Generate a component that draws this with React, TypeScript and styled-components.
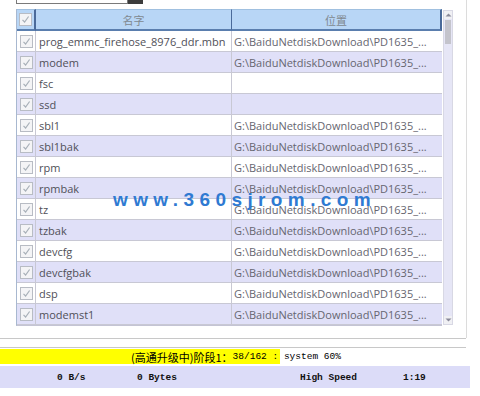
import React from 'react';
import styled, { createGlobalStyle } from 'styled-components';

const GlobalStyle = createGlobalStyle`
  html, body {
    margin: 0;
    padding: 0;
    background: #fff;
  }
  body {
    width: 480px;
    height: 396px;
    overflow: hidden;
    font-family: 'Open Sans', 'Noto Sans CJK SC', sans-serif;
  }
`;

const files = [
  { name: 'prog_emmc_firehose_8976_ddr.mbn', path: 'G:\\BaiduNetdiskDownload\\PD1635_...' },
  { name: 'modem', path: 'G:\\BaiduNetdiskDownload\\PD1635_...' },
  { name: 'fsc', path: '' },
  { name: 'ssd', path: '' },
  { name: 'sbl1', path: 'G:\\BaiduNetdiskDownload\\PD1635_...' },
  { name: 'sbl1bak', path: 'G:\\BaiduNetdiskDownload\\PD1635_...' },
  { name: 'rpm', path: 'G:\\BaiduNetdiskDownload\\PD1635_...' },
  { name: 'rpmbak', path: 'G:\\BaiduNetdiskDownload\\PD1635_...' },
  { name: 'tz', path: 'G:\\BaiduNetdiskDownload\\PD1635_...' },
  { name: 'tzbak', path: 'G:\\BaiduNetdiskDownload\\PD1635_...' },
  { name: 'devcfg', path: 'G:\\BaiduNetdiskDownload\\PD1635_...' },
  { name: 'devcfgbak', path: 'G:\\BaiduNetdiskDownload\\PD1635_...' },
  { name: 'dsp', path: 'G:\\BaiduNetdiskDownload\\PD1635_...' },
  { name: 'modemst1', path: 'G:\\BaiduNetdiskDownload\\PD1635_...' },
];

const progress = 60;

const CheckBox = () => (
  <Box>
    <svg width="9" height="9" viewBox="0 0 9 9">
      <path d="M1.5 4.8 L3.6 7 L7.6 1.5" fill="none" stroke="#a8b0b8" strokeWidth="1.2" />
    </svg>
  </Box>
);

const App = () => {
  return (
    <>
      <GlobalStyle />
      <Page>
        <Panel>
          <ComboRow>
            <ComboField />
            <ComboButton />
          </ComboRow>
          <TableWrap>
            <Grid>
              <HeadCell $first>
                <CheckBox />
              </HeadCell>
              <HeadCell>名字</HeadCell>
              <HeadCell $last>位置</HeadCell>
              {files.map((f, i) => (
                <React.Fragment key={f.name}>
                  <CheckCell $alt={i % 2 === 1}>
                    <CheckBox />
                  </CheckCell>
                  <NameCell $alt={i % 2 === 1}>{f.name}</NameCell>
                  <PathCell $alt={i % 2 === 1}>{f.path}</PathCell>
                </React.Fragment>
              ))}
            </Grid>
            <ScrollBar>
              <ArrowBtn>
                <svg width="7" height="4" viewBox="0 0 7 4">
                  <path d="M0.5 3.5 L3.5 0.5 L6.5 3.5 Z" fill="#8a8a9a" />
                </svg>
              </ArrowBtn>
              <Thumb />
              <Track />
              <ArrowBtn>
                <svg width="7" height="4" viewBox="0 0 7 4">
                  <path d="M0.5 0.5 L3.5 3.5 L6.5 0.5 Z" fill="#8a8a9a" />
                </svg>
              </ArrowBtn>
            </ScrollBar>
            <Watermark>www.360sjrom.com</Watermark>
          </TableWrap>
        </Panel>
        <Rule />
        <Rule />
        <ProgressBar>
          <ProgressFill style={{ width: `${progress}%` }} />
          <ProgressText>
            <Cjk>(高通升级中)阶段1：</Cjk>38/162 : system {progress}%
          </ProgressText>
        </ProgressBar>
        <StatusRow>
          <StatusItem $x={57}>0 B/s</StatusItem>
          <StatusItem $x={137}>0 Bytes</StatusItem>
          <StatusItem $x={300}>High Speed</StatusItem>
          <StatusItem $x={403}>1:19</StatusItem>
        </StatusRow>
      </Page>
    </>
  );
};

const Page = styled.div`
  width: 480px;
  height: 396px;
  display: flex;
  flex-direction: column;
`;

const Panel = styled.div`
  width: 466px;
  height: 338px;
  border-right: 1px solid #dcdcdc;
  display: flex;
  flex-direction: column;
`;

const ComboRow = styled.div`
  display: flex;
  margin-left: 16px;
  margin-top: -6px;
`;

const ComboField = styled.div`
  width: 110px;
  height: 8px;
  border: 1px solid #7a7a7a;
  background: #fff;
`;

const ComboButton = styled.div`
  width: 15px;
  height: 10px;
  background: #3c3c3c;
`;

const TableWrap = styled.div`
  position: relative;
  display: flex;
  margin-left: 16px;
  margin-top: 5px;
  width: 437px;
`;

const Grid = styled.div`
  display: grid;
  grid-template-columns: 19px 196px 210px;
  grid-auto-rows: 21px;
  grid-template-rows: 22px;
  width: 426px;
  border-left: 1px solid #a8b8d0;
  border-bottom: 1px solid #c4c4d4;
`;

const HeadCell = styled.div<{ $first?: boolean; $last?: boolean }>`
  background: #b8d6f6;
  border-top: 1px solid #a0c0e0;
  border-bottom: 2px solid #5a7eae;
  border-right: ${(p) => (p.$first || p.$last ? '2px' : '1px')} solid #4a6a9a;
  display: flex;
  align-items: center;
  justify-content: center;
  font-family: 'Noto Sans CJK SC', sans-serif;
  font-size: 11px;
  color: #808890;
`;

const cellBase = `
  display: flex;
  align-items: center;
  border-bottom: 1px solid #c8c8d4;
  border-right: 1px solid #c8c8d4;
  overflow: hidden;
  white-space: nowrap;
  font-family: 'Open Sans', 'Noto Sans CJK SC', sans-serif;
  font-size: 11px;
`;

const CheckCell = styled.div<{ $alt: boolean }>`
  ${cellBase}
  justify-content: center;
  background: ${(p) => (p.$alt ? '#e0e0f8' : '#fff')};
`;

const NameCell = styled.div<{ $alt: boolean }>`
  ${cellBase}
  padding-left: 3px;
  color: #505058;
  background: ${(p) => (p.$alt ? '#e0e0f8' : '#fff')};
`;

const PathCell = styled.div<{ $alt: boolean }>`
  ${cellBase}
  padding-left: 2px;
  color: #666670;
  border-right: none;
  background: ${(p) => (p.$alt ? '#e0e0f8' : '#fff')};
`;

const Box = styled.div`
  width: 11px;
  height: 11px;
  border: 1px solid #b8bcc4;
  background: #f4f4f6;
  display: flex;
  align-items: center;
  justify-content: center;
`;

const ScrollBar = styled.div`
  width: 10px;
  margin-left: 1px;
  margin-top: 1px;
  height: 315px;
  display: flex;
  flex-direction: column;
  background: #e6e6f6;
  border: 1px solid #d8d8e4;
  box-sizing: border-box;
`;

const ArrowBtn = styled.div`
  height: 8px;
  display: flex;
  align-items: center;
  justify-content: center;
  background: #f0f0f4;
`;

const Thumb = styled.div`
  height: 24px;
  margin: 1px 1px 0;
  background: #c4c4cc;
`;

const Track = styled.div`
  flex: 1;
`;

const Watermark = styled.div`
  position: absolute;
  left: 97px;
  top: 180px;
  font-family: 'Liberation Sans', Arial, sans-serif;
  font-weight: bold;
  font-size: 19px;
  letter-spacing: 5.4px;
  color: #2f7ad2;
  pointer-events: none;
`;

const Rule = styled.div`
  width: 466px;
  height: 1px;
  background: #c8c8c8;
  margin-bottom: 8px;
`;

const ProgressBar = styled.div`
  position: relative;
  margin-top: -7px;
  width: 466px;
  height: 15px;
  background: #fff;
`;

const ProgressFill = styled.div`
  height: 100%;
  background: #ffff00;
`;

const ProgressText = styled.div`
  position: absolute;
  inset: 0;
  padding-left: 6px;
  display: flex;
  align-items: center;
  justify-content: center;
  font-family: 'Liberation Mono', monospace;
  font-size: 9.5px;
  color: #000;
  white-space: pre;
`;

const Cjk = styled.span`
  font-family: 'Noto Sans CJK SC', sans-serif;
  font-size: 11px;
`;

const StatusRow = styled.div`
  position: relative;
  margin-top: 2px;
  width: 470px;
  height: 22px;
  background: #dcdcf8;
`;

const StatusItem = styled.span<{ $x: number }>`
  position: absolute;
  left: ${(p) => p.$x}px;
  top: 6px;
  font-family: 'Liberation Mono', monospace;
  font-weight: bold;
  font-size: 9.5px;
  color: #111;
`;

export default App;
